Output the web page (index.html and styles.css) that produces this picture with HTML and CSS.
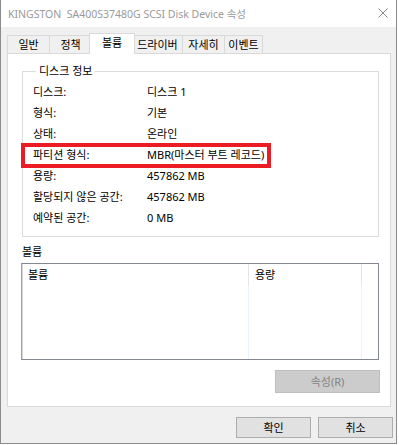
FILE: index.html
```html
<!DOCTYPE html>
<html lang="ko">
<head>
<meta charset="utf-8">
<title>속성</title>
<link rel="stylesheet" href="styles.css">
</head>
<body>
<div class="window">
  <div class="titlebar">
    <span class="title">KINGSTON&nbsp; SA400S37480G SCSI Disk Device 속성</span>
    <svg class="close" width="10" height="10" viewBox="0 0 10 10"><path d="M0.5 0.5 L9.5 9.5 M9.5 0.5 L0.5 9.5" stroke="#8a8a8a" stroke-width="1" fill="none"/></svg>
  </div>
  <div class="client">
    <div class="tabs">
      <div class="tab t1">일반</div>
      <div class="tab t2">정책</div>
      <div class="tab t3 selected">볼륨</div>
      <div class="tab t4">드라이버</div>
      <div class="tab t5">자세히</div>
      <div class="tab t6">이벤트</div>
    </div>
    <div class="panel">
      <fieldset class="group">
        <legend>디스크 정보</legend>
        <div class="info">
          <div class="row"><span>디스크:</span><span>디스크 1</span></div>
          <div class="row"><span>형식:</span><span>기본</span></div>
          <div class="row"><span>상태:</span><span>온라인</span></div>
          <div class="row"><span>파티션 형식:</span><span>MBR(마스터 부트 레코드)</span></div>
          <div class="row"><span>용량:</span><span>457862 MB</span></div>
          <div class="row"><span>할당되지 않은 공간:</span><span>457862 MB</span></div>
          <div class="row"><span>예약된 공간:</span><span>0 MB</span></div>
        </div>
      </fieldset>
      <i class="redbox"></i>
      <div class="vol-label">볼륨</div>
      <div class="list">
        <div class="list-cols">
          <div class="col c1"><div class="head">볼륨</div></div>
          <div class="col c2"><div class="head">용량</div></div>
          <div class="col c3"><div class="head"></div></div>
        </div>
      </div>
      <div class="prop-row"><button class="btn" disabled>속성(R)</button></div>
    </div>
    <div class="footer">
      <button class="btn">확인</button>
      <button class="btn">취소</button>
    </div>
  </div>
</div>
</body>
</html>
```

FILE: styles.css
```css
html, body {
  margin: 0;
  padding: 0;
  background: #ffffff;
}
body {
  font-family: "Noto Sans", "Noto Sans CJK KR", sans-serif;
  font-size: 11px;
  color: #000;
}
.window {
  width: 397px;
  height: 444px;
  box-sizing: border-box;
  border: 1px solid #8c8c8c;
  border-top: none;
  background: #f0f0f0;
  display: flex;
  flex-direction: column;
}
.titlebar {
  height: 27px;
  background: #ffffff;
  display: flex;
  align-items: center;
  justify-content: space-between;
  padding: 0 8px 0 7px;
  box-sizing: border-box;
  flex: none;
}
.title {
  color: #9a9a9a;
  font-size: 10.5px;
  line-height: 16px;
  white-space: nowrap;
}
.close {
  display: block;
  margin-top: -1px;
}
.client {
  flex: 1;
  display: flex;
  flex-direction: column;
}
.tabs {
  display: flex;
  align-items: flex-end;
  padding: 6px 0 0 6px;
  height: 20px;
  position: relative;
  z-index: 2;
}
.tab {
  height: 18px;
  box-sizing: border-box;
  border: 1px solid #d9d9d9;
  border-bottom: none;
  margin-left: -1px;
  background: #f0f0f0;
  text-align: center;
  line-height: 17px;
  flex: none;
}
.t1 { width: 43px; margin-left: 0; }
.t2 { width: 43px; }
.t3 { width: 43px; }
.t4 { width: 51px; }
.t5 { width: 43px; }
.t6 { width: 39px; }
.tab.selected {
  height: 21px;
  margin: 0 -2px -1px -3px;
  width: 46px;
  background: #ffffff;
  line-height: 18px;
  position: relative;
  z-index: 3;
}
.panel {
  margin-left: 6px;
  width: 384px;
  height: 354px;
  box-sizing: border-box;
  border: 1px solid #d9d9d9;
  background: #ffffff;
  position: relative;
  z-index: 1;
}
.group {
  margin: 9px 0 0 14px;
  width: 357px;
  box-sizing: border-box;
  border: 1px solid #dcdcdc;
  padding: 2px 10px 8px 10px;
  min-width: 0;
}
.group legend {
  padding: 0 3px;
  margin-left: 3px;
  line-height: 16px;
}
.info {
  display: grid;
  grid-template-columns: 114px 1fr;
}
.row {
  display: contents;
}
.row span {
  height: 21px;
  line-height: 21px;
  white-space: nowrap;
}
/* annotation drawn over the "파티션 형식" row */
.redbox {
  position: absolute;
  left: 13px;
  top: 89px;
  width: 250px;
  height: 25px;
  box-sizing: border-box;
  border: 4px solid #ec1c24;
  pointer-events: none;
}
.vol-label {
  margin: 7px 0 0 14px;
  line-height: 16px;
}
.list {
  margin: 3px 0 0 13px;
  width: 358px;
  height: 97px;
  box-sizing: border-box;
  border: 1px solid #828790;
  border-left-color: #a0a4aa;
  box-shadow: inset 1px 0 0 #d4d4d4;
  background: #fff;
}
.list-cols {
  display: flex;
  height: 100%;
}
.col {
  height: 100%;
  box-sizing: border-box;
}
.c1 { width: 227px; border-right: 1px solid #eaf2fb; }
.c2 { width: 113px; border-right: 1px solid #eaf2fb; }
.c3 { flex: 1; }
.head {
  height: 22px;
  line-height: 22px;
  padding-left: 6px;
  box-sizing: border-box;
  margin-right: -1px;
  border-right: 1px solid #e5e5e5;
}
.c3 .head { border-right: none; }
.prop-row {
  display: flex;
  justify-content: flex-end;
  padding-right: 10px;
  margin-top: 10px;
}
.btn {
  font-family: inherit;
  font-size: 11px;
  width: 75px;
  height: 21px;
  padding: 0;
  margin: 0;
  box-sizing: border-box;
  background: #e1e1e1;
  border: 1px solid #adadad;
  color: #000;
  line-height: 18px;
}
.btn:disabled {
  width: 105px;
  height: 23px;
  background: #cccccc;
  border-color: #bfbfbf;
  color: #838383;
}
.footer {
  display: flex;
  justify-content: flex-end;
  gap: 7px;
  padding: 10px 3px 0 0;
}
```
